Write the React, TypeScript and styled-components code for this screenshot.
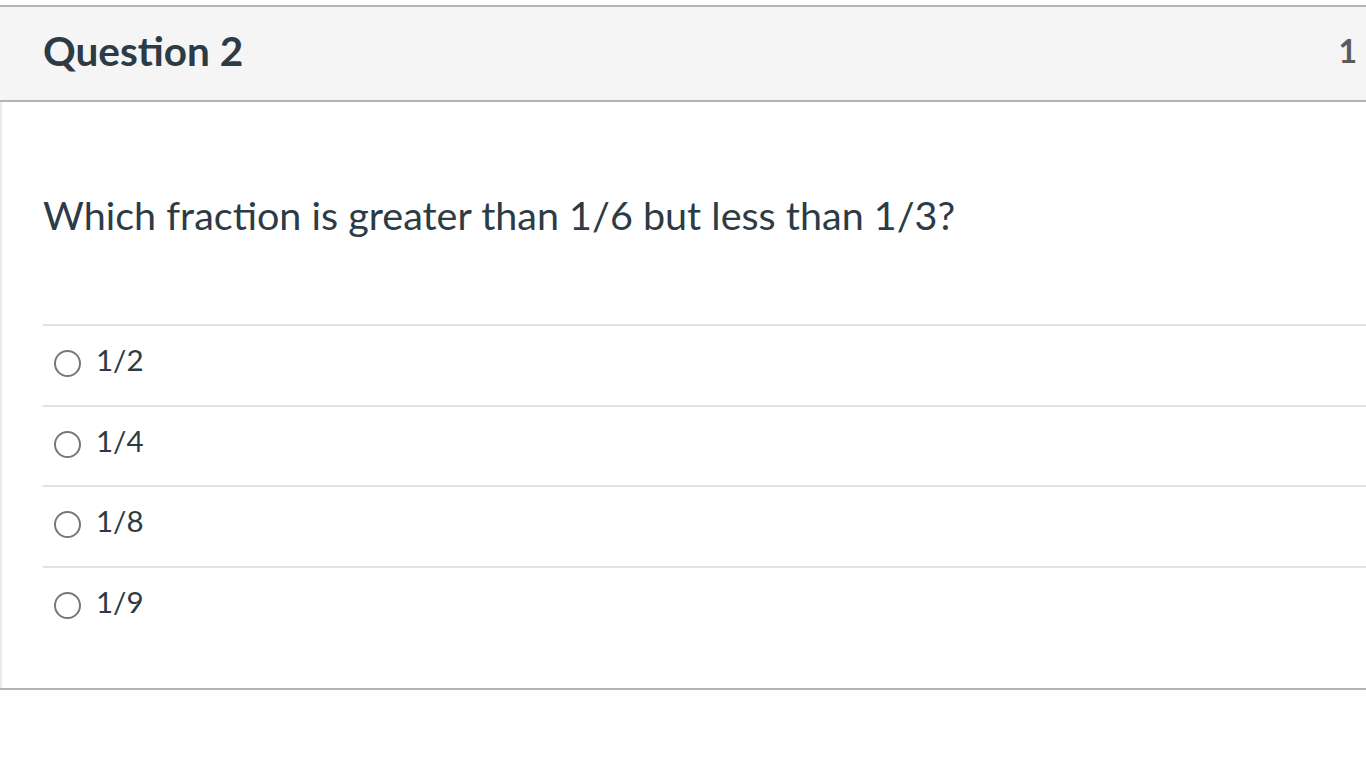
import React from 'react'
import styled, { createGlobalStyle } from 'styled-components'

const GlobalStyle = createGlobalStyle`
  html, body {
    margin: 0;
    padding: 0;
    background: #fff;
    overflow: hidden;
  }
  body {
    font-family: Lato, 'Open Sans', sans-serif;
    color: #2d3b45;
  }
`

const answers = ['1/2', '1/4', '1/8', '1/9']

export default function App() {
  return (
    <>
      <GlobalStyle />
      <Page>
        <Question>
          <Header>
            <Title>Question 2</Title>
            <Points>1</Points>
          </Header>
          <Body>
            <Prompt>Which fraction is greater than 1/6 but less than 1/3?</Prompt>
            <Answers>
              {answers.map((a) => (
                <Answer key={a}>
                  <Radio type='radio' name='q2' />
                  <AnswerText>{a}</AnswerText>
                </Answer>
              ))}
            </Answers>
          </Body>
        </Question>
      </Page>
    </>
  )
}

const Page = styled.div`
  padding-top: 5px;
`

const Question = styled.div`
  border-top: 2px solid #b3b3b3;
  border-bottom: 2px solid #b3b3b3;
`

const Header = styled.div`
  display: flex;
  align-items: center;
  justify-content: space-between;
  height: 93px;
  padding: 0 9px 0 43px;
  background: #f5f5f5;
  border-bottom: 2px solid #b3b3b3;
`

const Title = styled.h2`
  margin: 0;
  font-size: 40.5px;
  font-weight: 700;
  color: #2d3b45;
  padding-bottom: 6px;
`

const Points = styled.span`
  font-size: 32px;
  font-weight: 700;
  color: #5b5b5b;
  padding-bottom: 6px;
`

const Body = styled.div`
  border-left: 2px solid #ebebeb;
  padding: 0 0 41px 41px;
`

const Prompt = styled.p`
  margin: 0;
  padding: 90px 0 86px;
  font-size: 39.5px;
  line-height: 46px;
  color: #2d3b45;
`

const Answers = styled.div`
  display: flex;
  flex-direction: column;
`

const Answer = styled.label`
  display: flex;
  align-items: center;
  height: 78.7px;
  box-sizing: content-box;
  border-top: 2px solid #e2e2e2;
  padding-left: 11px;
  gap: 15px;
`

const Radio = styled.input`
  appearance: none;
  margin: 0 0 4px;
  width: 27px;
  height: 27px;
  border: 2px solid #777;
  border-radius: 50%;
  background: #fff;
  box-sizing: border-box;
`

const AnswerText = styled.span`
  font-size: 29.5px;
  color: #2d3b45;
  padding-bottom: 12px;
`
